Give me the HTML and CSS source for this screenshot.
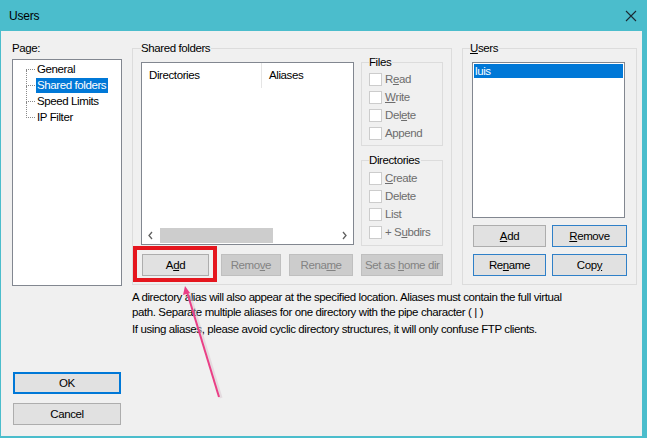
FILE: index.html
```html
<!DOCTYPE html>
<html lang="en">
<head>
	<meta charset="UTF-8">
	<title>Users</title>
	<link rel="stylesheet" href="styles.css">
</head>
<body>
	<div class="window">
		<div class="titlebar">
			<span class="title">Users</span>
			<svg class="close" width="12" height="12" viewBox="0 0 12 12">
				<path d="M1 1 L11 11 M11 1 L1 11" stroke="#1b2a33" stroke-width="1.1" fill="none" />
			</svg>
		</div>
		<div class="body">
			<!-- левая колонка: дерево страниц и кнопки -->
			<div class="left">
				<div class="label">Page:</div>
				<div class="tree">
					<ul class="tree-list">
						<li><span>General</span></li>
						<li><span class="selected">Shared folders</span></li>
						<li><span>Speed Limits</span></li>
						<li><span>IP Filter</span></li>
					</ul>
				</div>
				<div class="dlg-buttons">
					<button class="btn btn-default">OK</button>
					<button class="btn">Cancel</button>
				</div>
			</div>

			<div class="main">
				<div class="groups">
					<fieldset class="group group-shared">
						<legend>Shared folders</legend>
						<div class="shared-top">
							<div class="listview">
								<div class="lv-header">
									<div class="lv-col lv-dirs">Directories</div>
									<div class="lv-col lv-aliases">Aliases</div>
								</div>
								<div class="lv-body"></div>
								<div class="hscroll">
									<svg class="arrow" width="17" height="15" viewBox="0 0 17 15"><path d="M10 4 L7 7.5 L10 11" stroke="#606060" stroke-width="1.3" fill="none" /></svg>
									<div class="track"><div class="thumb"></div></div>
									<svg class="arrow" width="17" height="15" viewBox="0 0 17 15"><path d="M7 4 L10 7.5 L7 11" stroke="#606060" stroke-width="1.3" fill="none" /></svg>
								</div>
							</div>
							<div class="perms">
								<fieldset class="group group-small group-files">
									<legend>Files</legend>
									<label class="check"><span class="box"></span>R<u>e</u>ad</label>
									<label class="check"><span class="box"></span><u>W</u>rite</label>
									<label class="check"><span class="box"></span>Del<u>e</u>te</label>
									<label class="check"><span class="box"></span>Append</label>
								</fieldset>
								<fieldset class="group group-small group-dirs">
									<legend>Directories</legend>
									<label class="check"><span class="box"></span><u>C</u>reate</label>
									<label class="check"><span class="box"></span>Delete</label>
									<label class="check"><span class="box"></span>List</label>
									<label class="check"><span class="box"></span>+ S<u>u</u>bdirs</label>
								</fieldset>
							</div>
						</div>
						<div class="shared-buttons">
							<span class="highlight"><button class="btn btn-add">A<u>d</u>d</button></span>
							<button class="btn btn-disabled btn-remove">Remo<u>v</u>e</button>
							<button class="btn btn-disabled btn-rename">Rena<u>m</u>e</button>
							<button class="btn btn-disabled btn-home">Set as <u>h</u>ome dir</button>
						</div>
					</fieldset>

					<fieldset class="group group-users">
						<legend><u>U</u>sers</legend>
						<div class="userlist">
							<div class="user selected">luis</div>
						</div>
						<div class="user-buttons">
							<button class="btn"><u>A</u>dd</button>
							<button class="btn btn-focus"><u>R</u>emove</button>
							<button class="btn btn-focus">Re<u>n</u>ame</button>
							<button class="btn btn-focus">Cop<u>y</u></button>
						</div>
					</fieldset>
				</div>
				<div class="note">
					<p>A directory alias will also appear at the specified location. Aliases must contain the full virtual path. Separate multiple aliases for one directory with the pipe character ( | )</p>
					<p>If using aliases, please avoid cyclic directory structures, it will only confuse FTP clients.</p>
				</div>
			</div>
		</div>
		<!-- стрелка-аннотация поверх окна -->
		<svg class="pointer" width="647" height="438" viewBox="0 0 647 438">
			<line x1="219" y1="397" x2="187" y2="292" stroke="#d9c7d0" stroke-width="3" opacity=".5" transform="translate(2 1)" />
			<line x1="219" y1="397" x2="187" y2="292" stroke="#ea3f86" stroke-width="2" />
			<path d="M185 286 L183 295 L190 293 Z" fill="#ea3f86" />
		</svg>
	</div>
</body>
</html>
```

FILE: styles.css
```css
* {
	box-sizing: border-box;
}

body {
	margin: 0;
	font-family: "Liberation Sans", Arial, sans-serif;
	font-size: 11.5px;
	letter-spacing: -0.4px;
	color: #000;
}

.window { /*окно диалога*/
	position: relative;
	width: 647px;
	height: 438px;
	background: #f0f0f0;
	border: 1px solid #4bbdcc;
	border-top: 0;
	border-right-width: 5px;
	border-bottom-width: 2px;
	overflow: hidden;
}

.titlebar {
	display: flex;
	align-items: center;
	justify-content: space-between;
	height: 31px;
	margin: 0 -5px 0 -1px;
	padding: 0 10px 0 9px;
	background: #4bbdcc;
}

.title {
	font-size: 12px;
	letter-spacing: -0.2px;
}

.body {
	display: flex;
	height: 405px;
	padding: 10px 0 0 11px;
}

/* левая колонка */
.left {
	display: flex;
	flex-direction: column;
	width: 110px;
	margin-right: 10px;
}

.label {
	line-height: 14px;
	margin-bottom: 4px;
}

.tree {
	height: 227px;
	background: #fff;
	border: 1px solid #828790;
	padding: 2px 0 0 13px;
}

.tree-list {
	list-style: none;
	margin: 0;
	padding: 0;
}

.tree-list li {
	position: relative;
	height: 16px;
	line-height: 15px;
	padding-left: 10px;
}

.tree-list li::before { /*вертикальная пунктирная линия*/
	content: "";
	position: absolute;
	left: 0;
	top: -8px;
	height: 16px;
	border-left: 1px dotted #8a8a8a;
}

.tree-list li:first-child::before {
	display: none;
}

.tree-list li::after { /*горизонтальная линия*/
	content: "";
	position: absolute;
	left: 0;
	top: 7px;
	width: 9px;
	border-top: 1px dotted #8a8a8a;
}

.tree-list span {
	display: inline-block;
	padding: 0 2px 0 1px;
}

.tree-list .selected {
	background: #0078d7;
	color: #fff;
}

.dlg-buttons {
	display: flex;
	flex-direction: column;
	gap: 9px;
	margin-top: auto;
	margin-bottom: 11px;
	padding-left: 1px;
}

.dlg-buttons .btn {
	width: 108px;
	height: 22px;
}

/* кнопки */
.btn {
	font: inherit;
	letter-spacing: inherit;
	height: 22px;
	padding: 0;
	white-space: nowrap;
	background: #e1e1e1;
	border: 1px solid #adadad;
	color: #000;
}

.btn-default {
	border: 2px solid #0078d7;
}

.btn-focus {
	border-color: #2f80c8;
}

.btn-disabled {
	background: #cccccc;
	border-color: #bfbfbf;
	color: #838383;
}

/* основная часть */
.main {
	display: flex;
	flex-direction: column;
}

.groups {
	display: flex;
	gap: 10px;
}

.group {
	margin: 0;
	border: 1px solid #dcdcdc;
	min-width: 0;
}

.group legend {
	padding: 0 1px 0 0;
	margin-left: 0;
	line-height: 14px;
}

.group-shared {
	width: 320px;
	height: 244px;
	padding: 0 8px 0 8px;
}

.shared-top {
	display: flex;
	gap: 7px;
}

.listview {
	display: flex;
	flex-direction: column;
	width: 213px;
	height: 183px;
	margin-top: 7px;
	background: #fff;
	border: 1px solid #828790;
}

.lv-header {
	display: flex;
	height: 25px;
}

.lv-col {
	line-height: 24px;
	padding-left: 7px;
}

.lv-dirs {
	width: 120px;
	border-right: 1px solid #e5e5e5;
}

.lv-body {
	flex: 1;
}

.hscroll {
	display: flex;
	align-items: center;
	height: 17px;
	padding-bottom: 1px;
	background: #fff;
}

.track {
	flex: 1;
	height: 15px;
}

.thumb {
	width: 113px;
	height: 15px;
	margin-left: 1px;
	background: #cdcdcd;
}

.perms {
	width: 82px;
}

.group-small {
	padding: 1px 0 0 7px;
}

.group-files {
	height: 91px;
}

.group-dirs {
	height: 93px;
	margin-top: 7px;
	padding-top: 2px;
}

.check {
	display: flex;
	align-items: center;
	height: 18px;
	color: #6d6d6d;
}

.box {
	width: 13px;
	height: 13px;
	margin-right: 3px;
	background: #fff;
	border: 1px solid #cccccc;
}

.shared-buttons {
	display: flex;
	margin-top: 8px;
}

.highlight { /*красная рамка-аннотация вокруг кнопки*/
	position: relative;
	margin-left: 1px;
}

.highlight::after {
	content: "";
	position: absolute;
	left: -9px;
	top: -8px;
	right: -8px;
	bottom: -6px;
	border: 4px solid #e5161e;
}

.btn-add {
	width: 67px;
}

.btn-remove {
	width: 60px;
	margin-left: 12px;
}

.btn-rename {
	width: 65px;
	margin-left: 8px;
}

.btn-home {
	width: 82px;
	margin-left: 8px;
}

.group-users {
	width: 175px;
	height: 244px;
	padding: 7px 0 0 9px;
}

.group-users legend {
	margin-left: -2px;
}

.userlist {
	width: 153px;
	height: 156px;
	background: #fff;
	border: 1px solid #828790;
	padding: 1px;
}

.user {
	height: 14px;
	line-height: 14px;
	padding-left: 1px;
}

.user.selected {
	background: #0078d7;
	color: #fff;
}

.user-buttons {
	display: grid;
	grid-template-columns: 73px 75px;
	column-gap: 6px;
	row-gap: 7px;
	margin-top: 7px;
	margin-left: 1px;
}

.note {
	margin-top: 5px;
	width: 440px;
}

.note p {
	margin: 0 0 2px;
	line-height: 15px;
}

.pointer { /*розовая стрелка поверх содержимого*/
	position: absolute;
	left: -1px;
	top: 0;
	pointer-events: none;
}
```
